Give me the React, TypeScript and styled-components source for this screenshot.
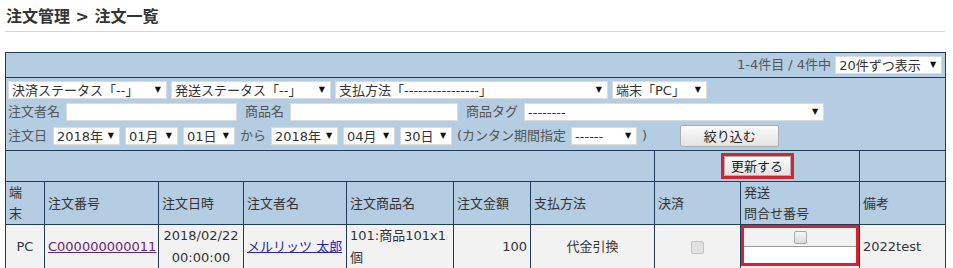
import React from 'react';
import styled, { createGlobalStyle, css } from 'styled-components';

const GlobalStyle = createGlobalStyle`
    html, body {
        margin: 0;
        padding: 0;
        background: #fff;
    }
    body {
        font-family: "DejaVu Sans", "Noto Sans CJK JP", sans-serif;
        font-size: 13px;
        color: #333;
    }
`;

const jp = `"DejaVu Sans", "Noto Sans CJK JP", sans-serif`;

const Page = styled.div`
    width: 940px;
    padding: 0 8px 0 5px;
`;

const Title = styled.h1`
    margin: 0;
    padding: 7px 0 4px 1px;
    font-family: ${jp};
    font-size: 16px;
    line-height: 20px;
    font-weight: bold;
    color: #333;
    border-bottom: 1px solid #d4d4d4;
`;

const OrderTable = styled.table`
    width: 940px;
    margin-top: 20px;
    border-collapse: collapse;
    table-layout: fixed;
    background: #b4cde2;
`;

type CellProps = {
    $align?: 'left' | 'center' | 'right';
    $h?: number;
    $pad?: string;
    $top?: boolean;
};

const Td = styled.td<CellProps>`
    border: 1px solid #1f3c5b;
    padding: ${(p) => p.$pad ?? '0 3px'};
    height: ${(p) => (p.$h ? `${p.$h}px` : 'auto')};
    text-align: ${(p) => p.$align ?? 'left'};
    vertical-align: ${(p) => (p.$top ? 'top' : 'middle')};
    line-height: 22px;
    box-sizing: border-box;
`;

const Th = styled.th`
    border: 1px solid #1f3c5b;
    padding: 0 3px;
    height: 42px;
    text-align: left;
    font-weight: normal;
    line-height: 21px;
    vertical-align: middle;
`;

const DataRow = styled.tr`
    background: #f2f2f2;
`;

const Meta = styled.span`
    color: #555;
    margin-right: 4px;
    vertical-align: middle;
`;

const FilterStack = styled.div`
    display: flex;
    flex-direction: column;
    gap: 4px;
`;

const FilterRow = styled.div<{ $gap: number; $h?: number }>`
    display: flex;
    align-items: center;
    gap: ${(p) => p.$gap}px;
    height: ${(p) => p.$h ?? 18}px;
    line-height: 18px;
`;

const Label = styled.span<{ $mr?: number }>`
    color: #555;
    white-space: nowrap;
    margin-right: ${(p) => p.$mr ?? 0}px;
`;

const SelectWrap = styled.span<{ $w: number; $mr?: number; $ml?: number }>`
    position: relative;
    display: inline-flex;
    flex: none;
    width: ${(p) => p.$w}px;
    height: 18px;
    margin-right: ${(p) => p.$mr ?? 0}px;
    margin-left: ${(p) => p.$ml ?? 0}px;
    background: #fff;
    border: 1px solid #dcdcdc;
    box-sizing: border-box;
    vertical-align: middle;
    text-align: left;
`;

const NativeSelect = styled.select`
    appearance: none;
    width: 100%;
    height: 100%;
    margin: 0;
    border: 0;
    padding: 0 14px 0 3px;
    background: transparent;
    font-family: ${jp};
    font-size: 13px;
    color: #333;
    outline: none;
`;

const Arrow = styled.span`
    position: absolute;
    right: 5px;
    top: 3px;
    font-size: 8px;
    line-height: 10px;
    color: #111;
    pointer-events: none;
`;

const TextInput = styled.input<{ $w: number; $mr?: number }>`
    flex: none;
    width: ${(p) => p.$w}px;
    height: 18px;
    margin: 0 ${(p) => p.$mr ?? 0}px 0 0;
    padding: 0 3px;
    border: 1px solid #dcdcdc;
    background: #fff;
    box-sizing: border-box;
`;

const Button = styled.button<{ $w: number; $h: number; $ml?: number }>`
    width: ${(p) => p.$w}px;
    height: ${(p) => p.$h}px;
    margin-left: ${(p) => p.$ml ?? 0}px;
    padding: 0;
    border: 1px solid #adadad;
    border-radius: 2px;
    background: linear-gradient(#fbfbfb, #e3e3e3);
    font-family: ${jp};
    font-size: 13px;
    color: #222;
    line-height: 1;
`;

const RedFrame = styled.div<{ $inline?: boolean }>`
    border: 3px solid #d02631;
    box-sizing: border-box;
    ${(p) =>
        p.$inline &&
        css`
            display: inline-flex;
            vertical-align: middle;
        `}
`;

const CheckBox = styled.input.attrs({ type: 'checkbox' })<{ $dim?: boolean }>`
    appearance: none;
    width: 13px;
    height: 13px;
    margin: 0;
    border: 1px solid #a8a8a8;
    border-radius: 2px;
    background: linear-gradient(#f6f6f6, #dadada);
    vertical-align: middle;

    ${(p) =>
        p.$dim &&
        css`
            border-color: #c3c3c3;
            background: #e2e2e2;
        `}
`;

const CheckArea = styled.div`
    display: flex;
    justify-content: center;
    align-items: center;
    height: 18px;
`;

const TrackInput = styled.input`
    display: block;
    width: 100%;
    height: 17px;
    margin: 0;
    border: 0;
    border-top: 1px solid #9a9a9a;
    background: #fff;
    box-sizing: border-box;
`;

const Link = styled.a<{ $visited?: boolean }>`
    color: ${(p) => (p.$visited ? '#6a1f7a' : '#2323b5')};
    text-decoration: underline;
    white-space: nowrap;
`;

type SelectProps = { w: number; text: string; mr?: number; ml?: number };

function Select({ w, text, mr, ml }: SelectProps): JSX.Element {
    return (
        <SelectWrap $w={w} $mr={mr} $ml={ml}>
            <NativeSelect defaultValue={text}>
                <option>{text}</option>
            </NativeSelect>
            <Arrow>▼</Arrow>
        </SelectWrap>
    );
}

const colWidths = [39, 114, 85, 103, 107, 77, 124, 86, 119, 86];

export default function App(): JSX.Element {
    return (
        <Page>
            <GlobalStyle />
            <Title>注文管理 &gt; 注文一覧</Title>
            <OrderTable>
                <colgroup>
                    {colWidths.map((w, i) => (
                        <col key={i} style={{ width: w }} />
                    ))}
                </colgroup>
                <tbody>
                    <tr>
                        <Td colSpan={10} $align="right" $h={25} $pad="0 3px">
                            <Meta>1-4件目 / 4件中</Meta>
                            <Select w={107} text="20件ずつ表示" />
                        </Td>
                    </tr>
                    <tr>
                        <Td colSpan={10} $pad="3px 2px">
                            <FilterStack>
                                <FilterRow $gap={4}>
                                    <Select w={159} text="決済ステータス「--」" />
                                    <Select w={160} text="発送ステータス「--」" />
                                    <Select w={273} text="支払方法「----------------」" />
                                    <Select w={95} text="端末「PC」" />
                                </FilterRow>
                                <FilterRow $gap={6}>
                                    <Label>注文者名</Label>
                                    <TextInput $w={171} $mr={2} />
                                    <Label>商品名</Label>
                                    <TextInput $w={168} $mr={2} />
                                    <Label>商品タグ</Label>
                                    <Select w={300} text="--------" />
                                </FilterRow>
                                <FilterRow $gap={5} $h={22}>
                                    <Label $mr={1}>注文日</Label>
                                    <Select w={67} text="2018年" />
                                    <Select w={53} text="01月" />
                                    <Select w={52} text="01日" />
                                    <Label>から</Label>
                                    <Select w={67} text="2018年" />
                                    <Select w={52} text="04月" />
                                    <Select w={52} text="30日" />
                                    <Label>(カンタン期間指定</Label>
                                    <Select w={66} text="------" />
                                    <Label>)</Label>
                                    <Button $w={99} $h={22} $ml={28}>
                                        絞り込む
                                    </Button>
                                </FilterRow>
                            </FilterStack>
                        </Td>
                    </tr>
                    <tr>
                        <Td colSpan={7} $h={31} />
                        <Td colSpan={2} $align="center" $pad="0">
                            <RedFrame $inline>
                                <Button $w={67} $h={20}>
                                    更新する
                                </Button>
                            </RedFrame>
                        </Td>
                        <Td />
                    </tr>
                    <tr>
                        <Th>
                            端<br />末
                        </Th>
                        <Th>注文番号</Th>
                        <Th>注文日時</Th>
                        <Th>注文者名</Th>
                        <Th>注文商品名</Th>
                        <Th>注文金額</Th>
                        <Th>支払方法</Th>
                        <Th>決済</Th>
                        <Th>
                            発送
                            <br />
                            問合せ番号
                        </Th>
                        <Th>備考</Th>
                    </tr>
                    <DataRow>
                        <Td $align="center" $h={41}>
                            PC
                        </Td>
                        <Td>
                            <Link href="#" $visited>
                                C000000000011
                            </Link>
                        </Td>
                        <Td $align="center">
                            2018/02/22
                            <br />
                            00:00:00
                        </Td>
                        <Td>
                            <Link href="#">メルリッツ 太郎</Link>
                        </Td>
                        <Td>
                            101:商品101x1
                            <br />個
                        </Td>
                        <Td $align="right">100</Td>
                        <Td $align="center">代金引換</Td>
                        <Td $align="center">
                            <CheckBox $dim />
                        </Td>
                        <Td $pad="0" $top>
                            <RedFrame>
                                <CheckArea>
                                    <CheckBox />
                                </CheckArea>
                                <TrackInput />
                            </RedFrame>
                        </Td>
                        <Td>2022test</Td>
                    </DataRow>
                </tbody>
            </OrderTable>
        </Page>
    );
}
